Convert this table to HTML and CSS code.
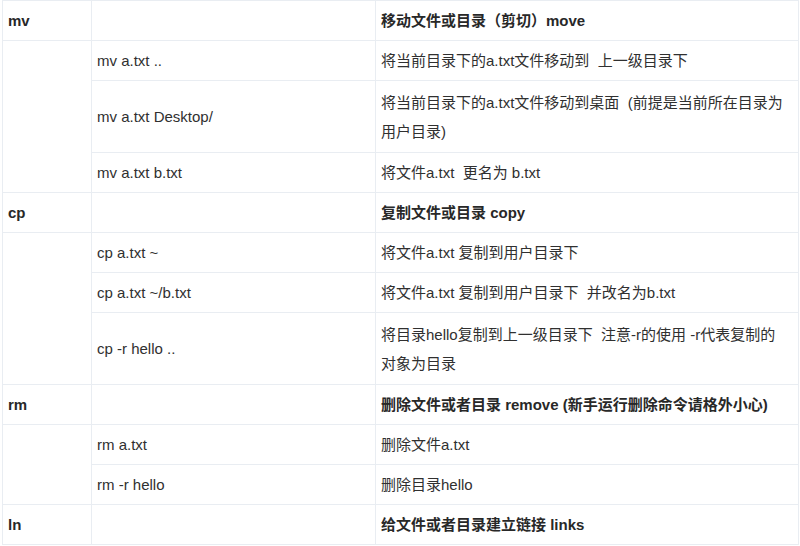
FILE: index.html
```html
<!DOCTYPE html>
<html lang="zh-CN">
<head>
<meta charset="utf-8">
<title>Linux 命令</title>
<link rel="stylesheet" href="styles.css">
</head>
<body>
<table class="cmd-table">
  <colgroup>
    <col class="c1">
    <col class="c2">
    <col class="c3">
  </colgroup>
  <tbody>
    <tr class="group">
      <td>mv</td>
      <td></td>
      <td>移动文件或目录（剪切）move</td>
    </tr>
    <tr>
      <td rowspan="3"></td>
      <td>mv a.txt ..</td>
      <td>将当前目录下的a.txt文件移动到&nbsp;&nbsp;上一级目录下</td>
    </tr>
    <tr class="multi">
      <td>mv a.txt Desktop/</td>
      <td>将当前目录下的a.txt文件移动到桌面&nbsp;&nbsp;(前提是当前所在目录为<br>用户目录)</td>
    </tr>
    <tr>
      <td>mv a.txt b.txt</td>
      <td>将文件a.txt&nbsp;&nbsp;更名为 b.txt</td>
    </tr>
    <tr class="group">
      <td>cp</td>
      <td></td>
      <td>复制文件或目录 copy</td>
    </tr>
    <tr>
      <td rowspan="3"></td>
      <td>cp a.txt ~</td>
      <td>将文件a.txt 复制到用户目录下</td>
    </tr>
    <tr>
      <td>cp a.txt ~/b.txt</td>
      <td>将文件a.txt 复制到用户目录下&nbsp;&nbsp;并改名为b.txt</td>
    </tr>
    <tr class="multi">
      <td>cp -r hello ..</td>
      <td>将目录hello复制到上一级目录下&nbsp;&nbsp;注意-r的使用 -r代表复制的<br>对象为目录</td>
    </tr>
    <tr class="group">
      <td>rm</td>
      <td></td>
      <td>删除文件或者目录 remove (新手运行删除命令请格外小心)</td>
    </tr>
    <tr>
      <td rowspan="2"></td>
      <td>rm a.txt</td>
      <td>删除文件a.txt</td>
    </tr>
    <tr>
      <td>rm -r hello</td>
      <td>删除目录hello</td>
    </tr>
    <tr class="group">
      <td>ln</td>
      <td></td>
      <td>给文件或者目录建立链接 links</td>
    </tr>
  </tbody>
</table>
</body>
</html>
```

FILE: styles.css
```css
html, body {
  margin: 0;
  padding: 0;
  background: #ffffff;
}

body {
  font-family: "Liberation Sans", "Noto Sans CJK SC", sans-serif;
  font-size: 15px;
  color: #303030;
}

.cmd-table {
  margin-left: 2px;
  border-collapse: collapse;
  table-layout: fixed;
  width: 796px;
}

.c1 { width: 89px; }
.c2 { width: 284px; }
.c3 { width: 423px; }

.cmd-table td {
  border: 1px solid #e9edf2;
  padding: 5px 5px;
  line-height: 29px;
  vertical-align: middle;
  white-space: nowrap;
}

.cmd-table .multi td {
  padding-top: 6.5px;
  padding-bottom: 6.5px;
}

.group td {
  font-weight: bold;
  color: #282828;
}
```
